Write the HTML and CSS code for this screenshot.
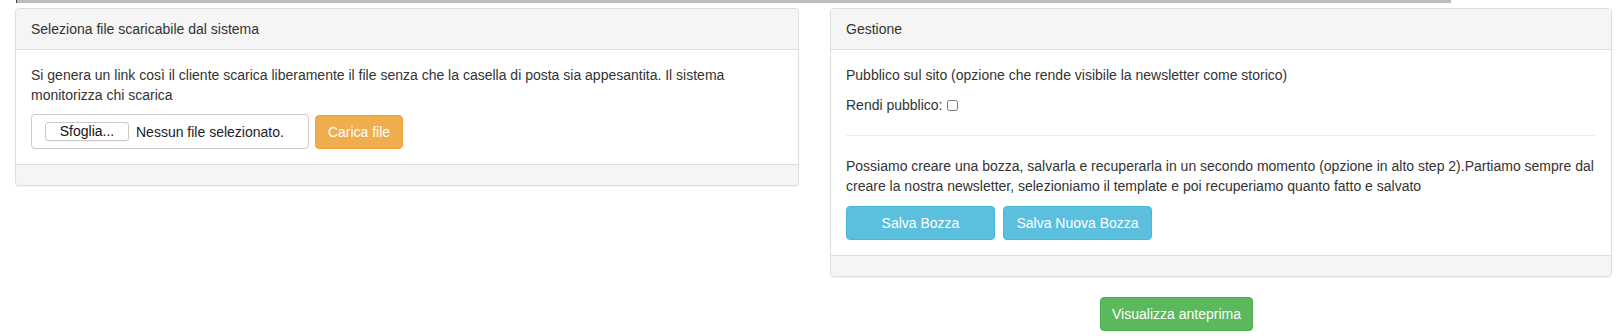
FILE: index.html
```html
<!DOCTYPE html>
<html lang="it">
  <head>
    <meta charset="utf-8">
    <title>Newsletter - allegati e gestione</title>
    <link rel="stylesheet" href="styles.css">
  </head>
  <body>
    <div class="edge"></div>

    <div class="row">
      <div class="col col-left">
        <div class="panel">
          <div class="panel-heading">Seleziona file scaricabile dal sistema</div>
          <div class="panel-body">
            <p class="intro">Si genera un link così il cliente scarica liberamente il file senza che la casella di posta sia appesantita. Il sistema monitorizza chi scarica</p>
            <div class="upload">
              <div class="file-box">
                <span class="file-btn">Sfoglia...</span>
                <span class="file-name">Nessun file selezionato.</span>
              </div>
              <button class="btn btn-warning">Carica file</button>
            </div>
          </div>
          <div class="panel-footer"></div>
        </div>
      </div>

      <div class="col col-right">
        <div class="panel">
          <div class="panel-heading">Gestione</div>
          <div class="panel-body">
            <p>Pubblico sul sito (opzione che rende visibile la newsletter come storico)</p>
            <p>
              <label for="pubblico">Rendi pubblico:</label>
              <input type="checkbox" id="pubblico" class="check">
            </p>
            <hr>
            <p>Possiamo creare una bozza, salvarla e recuperarla in un secondo momento (opzione in alto step 2).Partiamo sempre dal creare la nostra newsletter, selezioniamo il template e poi recuperiamo quanto fatto e salvato</p>
            <div class="actions">
              <button class="btn btn-info btn-wide">Salva Bozza</button>
              <button class="btn btn-info btn-wide">Salva Nuova Bozza</button>
            </div>
          </div>
          <div class="panel-footer"></div>
        </div>

        <div class="preview">
          <button class="btn btn-success">Visualizza anteprima</button>
        </div>
      </div>
    </div>
  </body>
</html>
```

FILE: styles.css
```css
* {
  box-sizing: border-box;
}
body {
  margin: 0;
  font-family: "Liberation Sans", Arial, Helvetica, sans-serif;
  font-size: 14px;
  line-height: 20px;
  color: #333;
  background: #fff;
}
p {
  margin: 0 0 10px;
}
.edge {
  margin-left: 16px;
  width: 1435px;
  height: 3px;
  background: #bdbdbd;
  border-left: 1px solid #444;
}
.row {
  display: flex;
  align-items: flex-start;
  column-gap: 31px;
  padding-left: 15px;
  margin-top: 5px;
}
.col-left {
  width: 784px;
}
.col-right {
  width: 782px;
}
.panel {
  border: 1px solid #ddd;
  border-radius: 4px;
  background: #fff;
  box-shadow: 0 1px 1px rgba(0, 0, 0, .05);
  margin-bottom: 20px;
}
.panel-heading {
  padding: 10px 15px;
  background: #f5f5f5;
  border-bottom: 1px solid #ddd;
  border-radius: 3px 3px 0 0;
}
.panel-body {
  padding: 15px;
}
.panel-footer {
  height: 21px;
  background: #f5f5f5;
  border-top: 1px solid #ddd;
  border-radius: 0 0 3px 3px;
}
.intro {
  margin-bottom: 9px;
}
.upload {
  display: flex;
  align-items: center;
  column-gap: 6px;
}
.file-box {
  display: flex;
  align-items: center;
  column-gap: 7px;
  width: 278px;
  height: 35px;
  padding-left: 13px;
  border: 1px solid #ccc;
  border-radius: 4px;
}
.file-btn {
  display: inline-block;
  width: 84px;
  height: 19px;
  line-height: 17px;
  text-align: center;
  font-size: 14px;
  color: #111;
  background: #fff;
  border: 1px solid #c9c9c9;
  border-radius: 3px;
  box-shadow: 0 1px 0 rgba(0, 0, 0, .04);
}
.file-name {
  font-size: 14px;
  color: #222;
}
.btn {
  display: inline-block;
  height: 34px;
  padding: 6px 12px;
  font-family: inherit;
  font-size: 14px;
  line-height: 20px;
  white-space: nowrap;
  text-align: center;
  color: #fff;
  border: 1px solid transparent;
  border-radius: 4px;
  cursor: pointer;
}
.btn-warning {
  background: #f0ad4e;
  border-color: #eea236;
  width: 88px;
  padding: 6px 0;
}
.btn-info {
  background: #5bc0de;
  border-color: #46b8da;
}
.btn-success {
  background: #5cb85c;
  border-color: #4cae4c;
  width: 153px;
  padding: 6px 0;
}
.btn-wide {
  width: 149px;
  padding: 6px 0;
}
.actions {
  display: flex;
  column-gap: 8px;
}
hr {
  margin: 20px 0 20px;
  border: 0;
  border-top: 1px solid #eee;
}
.check {
  width: 11px;
  height: 11px;
  margin: 0 0 0 1px;
  vertical-align: -1px;
}
.preview {
  padding-left: 270px;
}
```
